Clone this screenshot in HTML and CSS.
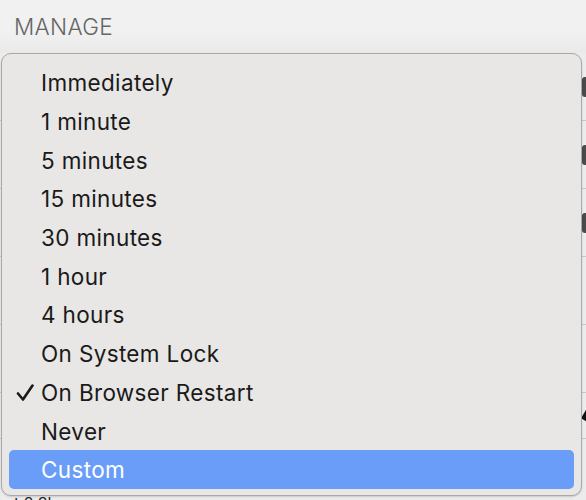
FILE: index.html
```html
<!DOCTYPE html>
<html>
<head>
<meta charset="utf-8">
<link rel="stylesheet" href="styles.css">
</head>
<body>
<div class="header"><span class="title">MANAGE</span></div>
<div class="page">
  <div class="row"><span class="label"></span><span class="gear"></span></div>
  <div class="row"><span class="label"></span><span class="gear"></span></div>
  <div class="row"><span class="label"></span><span class="gear"></span></div>
  <div class="row"><span class="label"></span></div>
  <div class="row"><span class="label"></span></div>
  <div class="row short"><span class="label"></span><span class="arrow"></span></div>
  <div class="row tail"><span class="label">t 2.3k</span></div>
</div>
<div class="menu">
  <div class="item">Immediately</div>
  <div class="item">1 minute</div>
  <div class="item">5 minutes</div>
  <div class="item">15 minutes</div>
  <div class="item">30 minutes</div>
  <div class="item">1 hour</div>
  <div class="item">4 hours</div>
  <div class="item">On System Lock</div>
  <div class="item checked"><svg class="check" width="18" height="18" viewBox="0 0 18 18"><polyline points="2,9.5 7,15.5 16.5,1.5" fill="none" stroke="#1a1a1a" stroke-width="2.6" stroke-linecap="round" stroke-linejoin="round"/></svg>On Browser Restart</div>
  <div class="item">Never</div>
  <div class="item active">Custom</div>
</div>
</body>
</html>
```

FILE: styles.css
```css
html, body {
  margin: 0;
  padding: 0;
}
body {
  width: 586px;
  height: 500px;
  overflow: hidden;
  position: relative;
  background: #ececec;
  font-family: Inter, "Liberation Sans", sans-serif;
}
.header {
  height: 53px;
  background: linear-gradient(#f1f1f1, #f1f1f1 60%, #e9e9e9);
  display: flex;
  align-items: center;
  padding-left: 14px;
  box-sizing: border-box;
}
.title {
  font-size: 22.5px;
  font-weight: 300;
  color: #666666;
  letter-spacing: 0.3px;
  padding-bottom: 1px;
}
.page {
  display: flex;
  flex-direction: column;
}
.row {
  height: 67px;
  flex: none;
  border-bottom: 1px solid #c8c8c8;
  display: flex;
  align-items: center;
  justify-content: space-between;
  padding-left: 14px;
}
.gear {
  width: 12px;
  height: 20px;
  border-radius: 3px;
  background: #4a4a4a;
  margin-right: -8px;
}
.short {
  height: 45px;
}
.arrow {
  width: 8px;
  height: 10px;
  background: #111;
  margin-right: -5px;
  transform: rotate(30deg);
}
.tail {
  border-bottom: none;
  height: auto;
  padding-top: 55px;
  align-items: flex-start;
}
.tail .label {
  font-size: 16px;
  line-height: 18px;
  color: #222;
}
.menu {
  position: absolute;
  left: 1px;
  top: 53px;
  width: 581px;
  height: 443px;
  box-sizing: border-box;
  background: #e8e7e5;
  border: 1px solid #a9a9a9;
  border-radius: 10px;
  padding: 9.5px 7px 0 7px;
  box-shadow: 0 1px 2px rgba(0,0,0,0.15);
}
.item {
  height: 38.7px;
  display: flex;
  align-items: center;
  padding-left: 32px;
  position: relative;
  font-size: 22.5px;
  color: #1a1a1a;
  letter-spacing: 0.35px;
  border-radius: 5px;
}
.check {
  position: absolute;
  left: 7px;
  top: 11px;
}
.active {
  background: #699df7;
  color: #ffffff;
}
```
